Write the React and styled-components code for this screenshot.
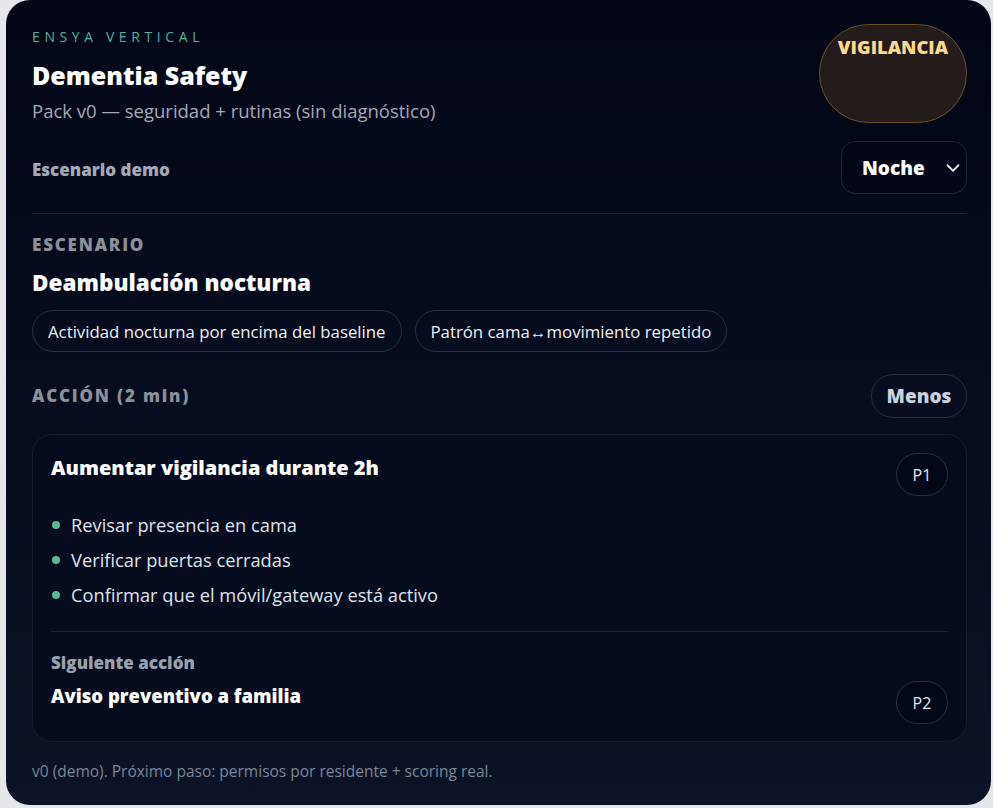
import React from "react";
import styled, { createGlobalStyle } from "styled-components";

const Global = createGlobalStyle`
  html, body { margin: 0; padding: 0; background: #e5e7eb; }
  body { font-family: "Open Sans", "Noto Sans", sans-serif; }
  * { box-sizing: border-box; }
`;

const Page = styled.div`
  padding: 0 2px 3px 6px;
`;

const Card = styled.main`
  height: 805px;
  border-radius: 24px;
  background: linear-gradient(180deg, #020617 0%, #0c1326 100%);
  padding: 24px 24px 0 26px;
  display: flex;
  flex-direction: column;
  color: #f8fafc;
`;

const Header = styled.header`
  display: flex;
  justify-content: space-between;
  align-items: stretch;
`;

const Brand = styled.div`
  display: flex;
  flex-direction: column;
`;

const Eyebrow = styled.div`
  font-size: 14px;
  letter-spacing: 4.6px;
  color: #4fb39b;
  line-height: 18px;
  margin-top: 4px;
`;

const Title = styled.h1`
  margin: 14px 0 0;
  font-size: 25px;
  font-weight: 800;
  line-height: 30px;
  color: #ffffff;
`;

const Subtitle = styled.p`
  margin: 9px 0 0;
  font-size: 18.5px;
  line-height: 24px;
  color: #a3a9b6;
`;

const Badge = styled.div`
  width: 148px;
  border-radius: 999px;
  background: #241c1a;
  border: 1px solid #6a4f24;
  color: #fcd98c;
  font-weight: 800;
  font-size: 18.4px;
  text-align: center;
  padding-top: 10px;
  line-height: 24px;
`;

const Row = styled.div`
  display: flex;
  justify-content: space-between;
  align-items: center;
  margin-top: ${(p) => p.$mt || 0}px;
`;

const FieldLabel = styled.span`
  font-size: 17px;
  font-weight: 800;
  color: #a3a9b6;
  padding-top: 3px;
`;

const Select = styled.button`
  width: 126px;
  height: 53px;
  border-radius: 14px;
  background: #020617;
  border: 1px solid #1f2838;
  color: #ffffff;
  font-family: inherit;
  font-size: 19px;
  font-weight: 800;
  display: flex;
  align-items: center;
  justify-content: space-between;
  padding: 0 2px 0 20px;
`;

const Divider = styled.hr`
  border: none;
  height: 1px;
  background: #1c2434;
  margin: ${(p) => p.$mt || 0}px 0 0;
  width: 100%;
`;

const SectionLabel = styled.div`
  font-size: 17px;
  font-weight: 800;
  letter-spacing: 1.8px;
  color: #8b9099;
  line-height: 20px;
  margin-top: ${(p) => p.$mt || 0}px;
`;

const ScenarioTitle = styled.h2`
  margin: 14px 0 0;
  font-size: 22.5px;
  font-weight: 800;
  line-height: 28px;
  color: #ffffff;
`;

const Chips = styled.div`
  display: flex;
  gap: 13px;
  margin-top: 13px;
`;

const Chip = styled.span`
  height: 42px;
  border-radius: 999px;
  border: 1px solid #253041;
  padding: 0 15px;
  display: inline-flex;
  align-items: center;
  font-size: 16.8px;
  color: #eef2f7;
`;

const PillButton = styled.button`
  width: 96px;
  height: 44px;
  border-radius: 999px;
  background: transparent;
  border: 1px solid #253041;
  color: #cbd2dd;
  font-family: inherit;
  font-size: 19px;
  font-weight: 800;
`;

const ActionCard = styled.section`
  margin-top: 16px;
  border-radius: 20px;
  border: 1px solid #161e2e;
  background: #060b1d;
  padding: 18px 18px 17px 18px;
`;

const ActionHead = styled.div`
  display: flex;
  justify-content: space-between;
  align-items: flex-start;
`;

const ActionTitle = styled.h3`
  margin: 1px 0 0;
  font-size: 20px;
  font-weight: 800;
  line-height: 28px;
  color: #ffffff;
`;

const Priority = styled.span`
  width: 52px;
  height: 43px;
  border-radius: 999px;
  border: 1px solid #253041;
  background: #030818;
  display: inline-flex;
  align-items: center;
  justify-content: center;
  font-size: 16px;
  color: #e6ebf2;
  flex-shrink: 0;
`;

const List = styled.ul`
  list-style: none;
  margin: 16px 0 0;
  padding: 0;
  display: flex;
  flex-direction: column;
  gap: 9px;
`;

const Item = styled.li`
  display: flex;
  align-items: center;
  gap: 11px;
  font-size: 18.3px;
  line-height: 26px;
  color: #dfe4ec;
  &::before {
    content: "";
    width: 8px;
    height: 8px;
    border-radius: 50%;
    background: #5cb796;
    margin-left: 1px;
  }
`;

const Next = styled.div`
  display: flex;
  justify-content: space-between;
  align-items: flex-end;
  margin-top: 21px;
`;

const NextLabel = styled.div`
  font-size: 17px;
  font-weight: 800;
  color: #9aa1ae;
  line-height: 20px;
`;

const NextTitle = styled.div`
  margin-top: 11px;
  font-size: 18.5px;
  font-weight: 800;
  line-height: 24px;
  color: #ffffff;
  padding-bottom: 16px;
`;

const Footer = styled.p`
  margin: 19px 0 0;
  font-size: 15.5px;
  line-height: 20px;
  color: #7b8698;
`;

const Chevron = () => (
  <svg width="22" height="22" viewBox="0 0 24 24" fill="none" stroke="#e5e7eb" strokeWidth="2" strokeLinecap="round" strokeLinejoin="round">
    <path d="M6 9l6 6 6-6" />
  </svg>
);

export default function App() {
  const steps = [
    "Revisar presencia en cama",
    "Verificar puertas cerradas",
    "Confirmar que el móvil/gateway está activo",
  ];
  return (
    <Page>
      <Global />
      <Card>
        <Header>
          <Brand>
            <Eyebrow>ENSYA VERTICAL</Eyebrow>
            <Title>Dementia Safety</Title>
            <Subtitle>Pack v0 — seguridad + rutinas (sin diagnóstico)</Subtitle>
          </Brand>
          <Badge>VIGILANCIA</Badge>
        </Header>

        <Row $mt={18}>
          <FieldLabel>Escenario demo</FieldLabel>
          <Select>
            Noche
            <Chevron />
          </Select>
        </Row>

        <Divider $mt={19} />

        <SectionLabel $mt={21}>ESCENARIO</SectionLabel>
        <ScenarioTitle>Deambulación nocturna</ScenarioTitle>
        <Chips>
          <Chip>Actividad nocturna por encima del baseline</Chip>
          <Chip>Patrón cama↔movimiento repetido</Chip>
        </Chips>

        <Row $mt={22}>
          <SectionLabel>ACCIÓN (2 min)</SectionLabel>
          <PillButton>Menos</PillButton>
        </Row>

        <ActionCard>
          <ActionHead>
            <ActionTitle>Aumentar vigilancia durante 2h</ActionTitle>
            <Priority>P1</Priority>
          </ActionHead>
          <List>
            {steps.map((s) => (
              <Item key={s}>{s}</Item>
            ))}
          </List>
          <Divider $mt={23} />
          <Next>
            <div>
              <NextLabel>Siguiente acción</NextLabel>
              <NextTitle>Aviso preventivo a familia</NextTitle>
            </div>
            <Priority>P2</Priority>
          </Next>
        </ActionCard>

        <Footer>v0 (demo). Próximo paso: permisos por residente + scoring real.</Footer>
      </Card>
    </Page>
  );
}
